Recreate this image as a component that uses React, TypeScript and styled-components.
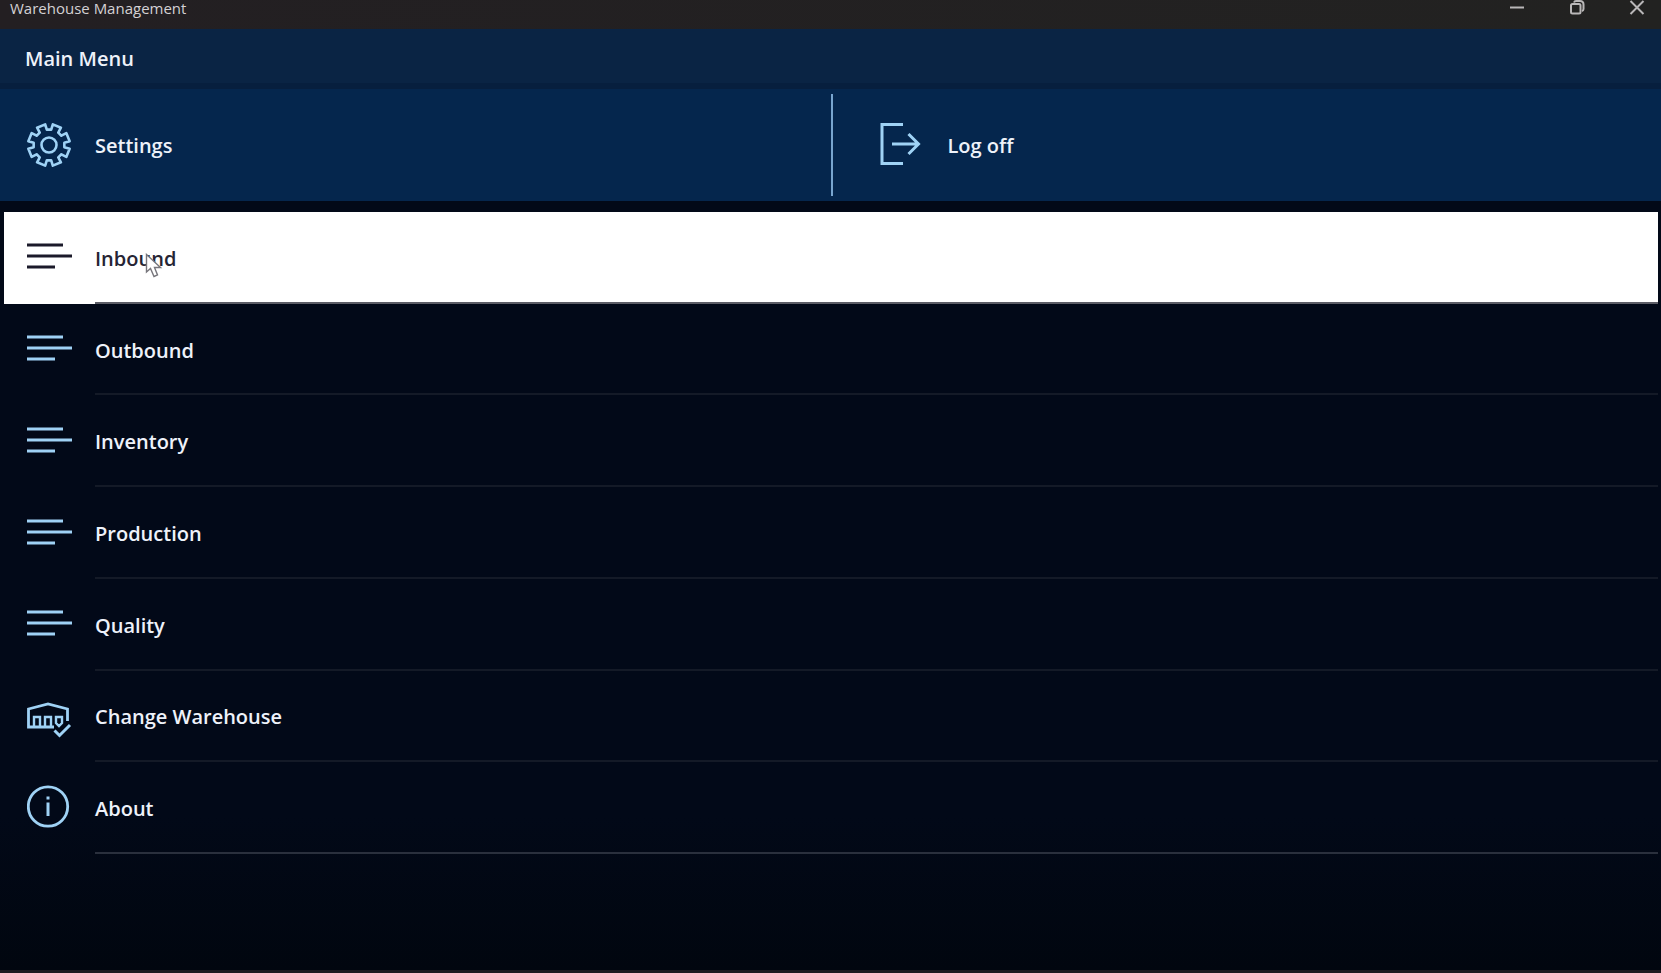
import React from "react";
import styled, { createGlobalStyle, css } from "styled-components";

const GlobalStyle = createGlobalStyle`
  *, *::before, *::after { box-sizing: border-box; }
  body {
    margin: 0;
    background: #020916;
    font-family: "Open Sans", "Noto Sans", sans-serif;
  }
`;

const Window = styled.div`
  display: flex;
  flex-direction: column;
  min-height: 100vh;
  color: #eef2fa;
  border-bottom: 3px solid #211a20;
`;

const TitleBar = styled.header`
  display: flex;
  justify-content: space-between;
  height: 29px;
  padding-left: 10px;
  background: linear-gradient(90deg, #231f22, #222221);
`;

const WindowTitle = styled.span`
  font-size: 15px;
  line-height: 16px;
  color: #d4d1d4;
`;

const WindowControls = styled.div`
  display: flex;
`;

const ControlButton = styled.button`
  display: flex;
  justify-content: flex-end;
  width: 60px;
  height: 28px;
  padding: 0 16px 0 0;
  border: 0;
  background: transparent;
  color: #b9b7b8;
`;

const PageHeader = styled.div`
  display: flex;
  align-items: center;
  height: 60px;
  padding: 6px 25px 0;
  background: #0a2444;
  border-bottom: 6px solid #071f3e;
`;

const PageTitle = styled.h1`
  margin: 0;
  font-size: 20px;
  line-height: 28px;
  font-weight: 600;
`;

const QuickActions = styled.nav`
  display: grid;
  grid-template-columns: 1fr 1fr;
  padding: 5px 0;
  background: #05264d;
`;

const itemBase = css`
  display: flex;
  align-items: center;
  padding: 0 0 0 23px;
  border: 0;
  background: transparent;
  color: inherit;
  font: inherit;
  font-size: 20px;
  line-height: 28px;
  font-weight: 600;
  text-align: left;
  gap: 22px;
`;

const QuickAction = styled.button<{ $divided?: boolean }>`
  ${itemBase}
  height: 102px;
  padding-left: ${(p) => (p.$divided ? "47px" : "27px")};
  border-left: ${(p) => (p.$divided ? "2px solid #79a5cf" : "0")};
`;

const Icon = styled.svg`
  flex: none;
  width: 46px;
  height: 46px;
  fill: none;
  stroke: currentColor;
  stroke-width: 3;
`;

const IconTint = styled.span<{ $dark?: boolean }>`
  display: flex;
  color: ${(p) => (p.$dark ? "#1b1a2a" : "#9fd2f5")};
`;

const ActionLabel = styled.span`
  padding-top: 2px;
`;

const Menu = styled.ul`
  display: flex;
  flex: 1;
  flex-direction: column;
  margin: 0;
  padding: 11px 3px 116px 4px;
  list-style: none;
  background: linear-gradient(#020918 80%, #01060f);
`;

const MenuItem = styled.li`
  position: relative;
  display: flex;
  flex: 1;
  min-height: 64px;
`;

const MenuButton = styled.button<{ $active?: boolean }>`
  ${itemBase}
  flex: 1;
  align-items: stretch;
  background: ${(p) => (p.$active ? "#fff" : "transparent")};
  color: ${(p) => (p.$active ? "#262433" : "inherit")};

  & > ${IconTint} {
    align-items: center;
    padding-bottom: 3px;
  }
`;

const MenuLabel = styled.span<{ $last?: boolean; $active?: boolean }>`
  display: flex;
  flex: 1;
  align-items: center;
  padding-top: 4px;
  border-bottom: 2px solid
    ${(p) => (p.$active ? "#5c5d66" : p.$last ? "#2a303d" : "#141a27")};
`;

const Pointer = styled.svg`
  position: absolute;
  left: 141px;
  top: 41px;
  width: 18px;
  height: 26px;
  pointer-events: none;
`;

function gearPath(): string {
  const teeth = 8;
  const step = (Math.PI * 2) / teeth;
  const points: string[] = [];
  for (let i = 0; i < teeth; i++) {
    const centre = (i + 0.5) * step;
    const corners: [number, number][] = [
      [15.5, -0.25],
      [21, -0.21],
      [21, 0.21],
      [15.5, 0.25],
    ];
    corners.forEach(([r, a]) => {
      points.push(
        `${(23 + r * Math.cos(centre + a)).toFixed(2)} ${(23 + r * Math.sin(centre + a)).toFixed(2)}`
      );
    });
  }
  return `M${points.join("L")}Z`;
}

const GearIcon = () => (
  <Icon viewBox="1 0 46 46" aria-hidden="true">
    <path d={gearPath()} strokeWidth="2.6" strokeLinejoin="round" />
    <circle cx="23" cy="23" r="7.5" strokeWidth="2.6" />
  </Icon>
);

const LogOffIcon = () => (
  <Icon viewBox="0 0 46 46" aria-hidden="true">
    <path d="M23 2.5H2V41.5H23M12 22H38M28.5 12L38.5 22L28.5 32" />
  </Icon>
);

const LinesIcon = () => (
  <Icon viewBox="0 0 46 46" aria-hidden="true">
    <path d="M0 12H36M0 23H45M0 34H28" />
  </Icon>
);

const WarehouseIcon = () => (
  <Icon viewBox="0 0 46 46" aria-hidden="true">
    <path d="M40.500 29V17L21 12L1.500 17V35H27" strokeWidth="2.8" />
    <path d="M7 35V25H13V35M18 35V25H24V35M29 25H35V31L32 34L29 31Z" strokeWidth="2.4" />
    <path d="M27.500 38.500L32.500 43.500L43 33" strokeWidth="3" />
  </Icon>
);

const InfoIcon = () => (
  <Icon viewBox="0 0 46 46" aria-hidden="true">
    <circle cx="21" cy="22.500" r="19.700" strokeWidth="2.8" />
    <path d="M21 18.500V32M21 12.500V15.500" strokeWidth="3" />
  </Icon>
);

const items = [
  { label: "Inbound", Glyph: LinesIcon },
  { label: "Outbound", Glyph: LinesIcon },
  { label: "Inventory", Glyph: LinesIcon },
  { label: "Production", Glyph: LinesIcon },
  { label: "Quality", Glyph: LinesIcon },
  { label: "Change Warehouse", Glyph: WarehouseIcon },
  { label: "About", Glyph: InfoIcon },
];

export default function App() {
  return (
    <Window>
      <GlobalStyle />
      <TitleBar>
        <WindowTitle>Warehouse Management</WindowTitle>
        <WindowControls>
          <ControlButton aria-label="Minimize">
            <svg width="16" height="16" fill="none" stroke="currentColor" strokeWidth="2">
              <path d="M1 7.500H15" />
            </svg>
          </ControlButton>
          <ControlButton aria-label="Restore">
            <svg width="16" height="16" fill="none" stroke="currentColor" strokeWidth="2">
              <rect x="2" y="4" width="9.500" height="9.500" rx="1.500" />
              <path d="M5 2.500Q5.500 1 7 1H11Q14.500 1 14.500 4.500V9Q14.500 10.500 13 11" />
            </svg>
          </ControlButton>
          <ControlButton aria-label="Close">
            <svg width="16" height="16" fill="none" stroke="currentColor" strokeWidth="2">
              <path d="M1.500 1L14.500 14M14.500 1L1.500 14" />
            </svg>
          </ControlButton>
        </WindowControls>
      </TitleBar>
      <PageHeader>
        <PageTitle>Main Menu</PageTitle>
      </PageHeader>
      <QuickActions aria-label="Quick actions">
        <QuickAction>
          <IconTint><GearIcon /></IconTint>
          <ActionLabel>Settings</ActionLabel>
        </QuickAction>
        <QuickAction $divided>
          <IconTint><LogOffIcon /></IconTint>
          <ActionLabel>Log off</ActionLabel>
        </QuickAction>
      </QuickActions>
      <Menu>
        {items.map(({ label, Glyph }, i) => {
          const active = i === 0;
          return (
            <MenuItem key={label}>
              <MenuButton $active={active}>
                <IconTint $dark={active}><Glyph /></IconTint>
                <MenuLabel $active={active} $last={i === items.length - 1}>{label}</MenuLabel>
              </MenuButton>
              {active && (
                <Pointer viewBox="0 0 18 26" aria-hidden="true">
                  <path d="M1.500 1.500V19L5.500 15.500L9 23.500L12.500 22L9.500 14.500H15.500Z" fill="#fff" stroke="#77767c" strokeWidth="1.400" />
                </Pointer>
              )}
            </MenuItem>
          );
        })}
      </Menu>
    </Window>
  );
}
